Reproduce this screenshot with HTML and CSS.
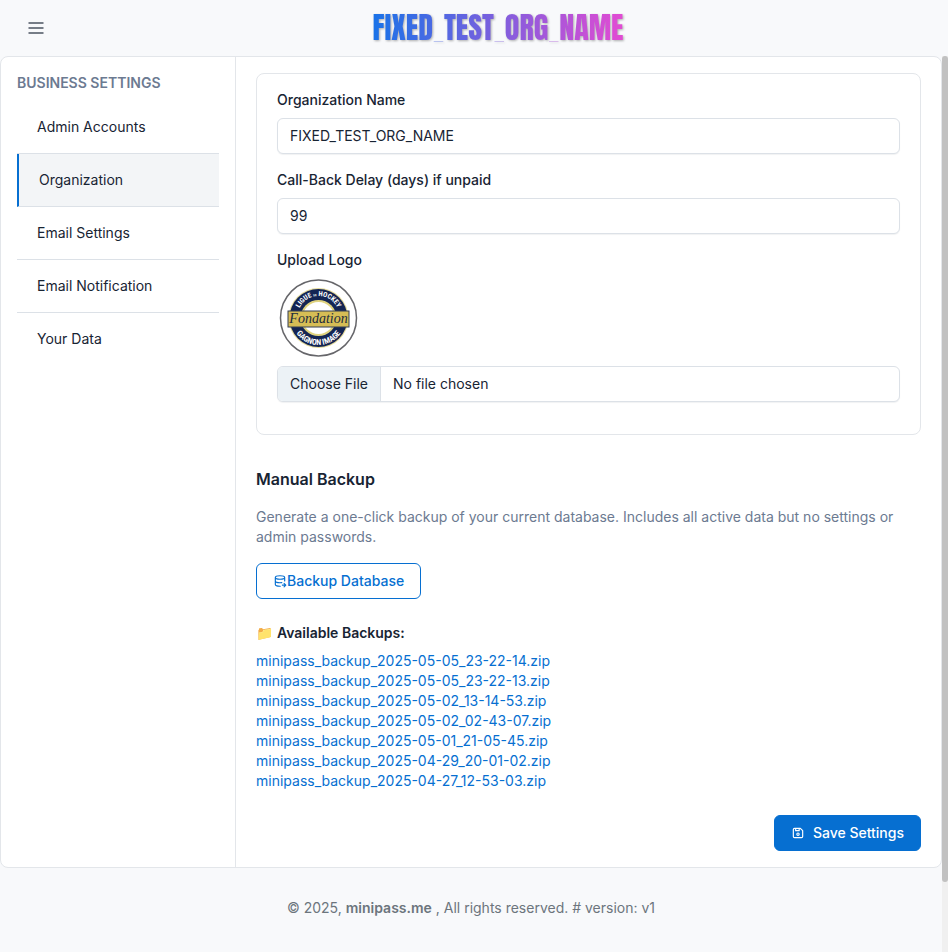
FILE: index.html
```html
<!DOCTYPE html>
<html lang="en">
<head>
<meta charset="utf-8">
<meta name="viewport" content="width=device-width, initial-scale=1">
<title>Organization settings</title>
<link rel="stylesheet" href="styles.css">
</head>
<body>
<header class="topbar">
  <button class="menu-button" type="button" aria-label="Menu">
    <svg viewBox="0 0 24 24" width="24" height="24" aria-hidden="true"><path d="M4.500 7h15M4.500 12h15M4.500 17h15"/></svg>
  </button>
  <div class="brand"><span class="brand-name">FIXED_TEST_ORG_NAME</span></div>
</header>
<div class="viewport">
  <div class="page">
    <main class="panel">
      <aside class="sidebar">
        <h2 class="sidebar-title">BUSINESS SETTINGS</h2>
        <nav class="tabs">
          <a class="tab" href="#admins">Admin Accounts</a>
          <a class="tab active" href="#organization">Organization</a>
          <a class="tab" href="#email">Email Settings</a>
          <a class="tab" href="#notification">Email Notification</a>
          <a class="tab" href="#data">Your Data</a>
        </nav>
      </aside>
      <form class="content">
        <section class="card">
          <div class="field">
            <label for="org">Organization Name</label>
            <input class="control" id="org" type="text" value="FIXED_TEST_ORG_NAME">
          </div>
          <div class="field">
            <label for="delay">Call-Back Delay (days) if unpaid</label>
            <input class="control" id="delay" type="text" inputmode="numeric" value="99">
          </div>
          <div class="field">
            <label for="logo">Upload Logo</label>
            <svg class="logo" viewBox="0 0 83 80" width="83" height="80" role="img" aria-label="Fondation logo">
              <defs>
                <path id="arc-top" d="M20.500 39a21 21 0 0 1 42 0"/>
                <path id="arc-bottom" d="M14.500 40a27 27 0 0 0 54 0"/>
              </defs>
              <circle cx="41.500" cy="40" r="38" fill="#fff" stroke="#66666a" stroke-width="1.500"/>
              <circle cx="41.500" cy="40" r="30" fill="#e6dc9c"/>
              <circle cx="41.500" cy="40" r="29" fill="#142553"/>
              <circle cx="41.500" cy="40" r="18" fill="#e0d37f"/>
              <circle cx="41.500" cy="40" r="16" fill="#fff"/>
              <text class="logo-ring"><textPath href="#arc-top" startOffset="50%">LIGUE <tspan class="logo-small">DE</tspan> HOCKEY</textPath></text>
              <text class="logo-ring logo-bottom"><textPath href="#arc-bottom" startOffset="50%">GAGNON IMAGE</textPath></text>
              <rect x="11" y="33" width="61" height="16" fill="#d6bd55" stroke="#343f55"/>
              <text class="logo-script" x="41.500" y="45">Fondation</text>
            </svg>
            <input class="control file" id="logo" type="file">
          </div>
        </section>
        <section class="backup">
          <h3>Manual Backup</h3>
          <p class="muted">Generate a one-click backup of your current database. Includes all active data but no settings or admin passwords.</p>
          <button class="button outline" type="button">
            <svg class="icon" viewBox="0 0 24 24" width="14" height="14" aria-hidden="true"><path d="M4 6c0 1.657 3.582 3 8 3s8-1.343 8-3-3.582-3-8-3-8 1.343-8 3M4 6v6c0 1.657 3.582 3 8 3 1.118 0 2.182-.086 3.148-.241M20 12V6M4 12v6c0 1.657 3.582 3 8 3 .157 0 .312-.002.466-.005M16 19h6M19 16l3 3-3 3"/></svg>Backup Database
          </button>
          <h4>📁 Available Backups:</h4>
          <ul class="files">
            <li><a href="#b1">minipass_backup_2025-05-05_23-22-14.zip</a></li>
            <li><a href="#b2">minipass_backup_2025-05-05_23-22-13.zip</a></li>
            <li><a href="#b3">minipass_backup_2025-05-02_13-14-53.zip</a></li>
            <li><a href="#b4">minipass_backup_2025-05-02_02-43-07.zip</a></li>
            <li><a href="#b5">minipass_backup_2025-05-01_21-05-45.zip</a></li>
            <li><a href="#b6">minipass_backup_2025-04-29_20-01-02.zip</a></li>
            <li><a href="#b7">minipass_backup_2025-04-27_12-53-03.zip</a></li>
          </ul>
        </section>
        <div class="actions">
          <button class="button primary" type="submit">
            <svg class="icon" viewBox="0 0 24 24" width="14" height="14" aria-hidden="true"><path d="M6 4h10l4 4v10a2 2 0 0 1-2 2H6a2 2 0 0 1-2-2V6a2 2 0 0 1 2-2M10 14a2 2 0 1 0 4 0 2 2 0 1 0-4 0M14 4v4H8V4"/></svg>Save Settings
          </button>
        </div>
      </form>
    </main>
    <footer class="footer">© 2025, <strong>minipass.me</strong> , All rights reserved. # version: v1</footer>
  </div>
  <div class="scroll-track" aria-hidden="true"><div class="scroll-thumb"></div></div>
</div>
</body>
</html>
```
FILE: styles.css
```css
* { box-sizing: border-box; }

body {
  margin: 0;
  min-height: 100vh;
  display: flex;
  flex-direction: column;
  background: #f8f9fb;
  color: #182433;
  font: 14px/20px Inter, "Noto Sans", "Noto Color Emoji", sans-serif;
}

a { color: #066fd1; text-decoration: none; }
h2, h3, h4, p, ul { margin: 0; padding: 0; }

.topbar { display: flex; align-items: center; height: 56px; padding-left: 24px; }
.menu-button { display: flex; padding: 0; border: 0; background: none; }
.menu-button svg { fill: none; stroke: #4b5462; stroke-width: 1.5; }
.brand { flex: 1; display: flex; justify-content: center; }
.brand-name {
  font: 400 30px/28px Anton, Impact, sans-serif;
  background: linear-gradient(90deg, #1a73e8, #e24bd3);
  background-clip: text;
  -webkit-background-clip: text;
  color: transparent;
  filter: drop-shadow(1px 1px 1px rgba(0, 0, 0, 0.3));
}

.viewport { flex: 1; display: flex; }
.page { flex: 1; min-width: 0; }
.panel {
  display: flex;
  background: #fff;
  border: 1px solid #e3e6ea;
  border-radius: 8px;
}

.sidebar { flex: 0 0 25%; padding: 16px; border-right: 1px solid #e3e6ea; }
.sidebar-title { margin-bottom: 8px; color: #6c7a91; font-size: 14px; font-weight: 600; line-height: 20px; }
.tab { display: block; padding: 16px 20px; border-bottom: 1px solid #dce1e7; color: #182433; }
.tab:last-child { border-bottom: 0; }
.tab.active { background: #f3f5f7; border-left: 2px solid #066fd1; }

.content { flex: 1; min-width: 0; padding: 16px 20px; }
.card { padding: 16px 20px; border: 1px solid #e3e6ea; border-radius: 8px; }
.field { margin-bottom: 16px; }
.field label { display: block; margin-bottom: 8px; font-weight: 500; }
.control {
  display: block;
  width: 100%;
  height: 36px;
  padding: 6px 12px 8px;
  border: 1px solid #dce1e7;
  border-radius: 6px;
  background: #fff;
  box-shadow: 0 1px 1px rgba(24, 36, 51, 0.06);
  color: inherit;
  font: inherit;
}
.file { padding: 7px 12px; overflow: hidden; }
.file::file-selector-button {
  margin: -7px 12px -7px -12px;
  padding: 7px 12px;
  border: 0;
  border-right: 1px solid #dce1e7;
  background: #ecf2f6;
  color: inherit;
  font: inherit;
}
.logo { display: block; margin-bottom: 8px; }
.logo-ring { fill: #fff; font: 700 7px "Roboto Condensed", Roboto, sans-serif; text-anchor: middle; }
.logo-bottom { font-size: 8px; }
.logo-small { font-size: 3px; }
.logo-script { fill: #222b3c; font: italic 400 14px "Liberation Serif", serif; text-anchor: middle; }

.backup { padding-top: 32px; }
.backup h3 { margin-bottom: 16px; font-size: 16px; font-weight: 600; line-height: 24px; }
.muted { margin-bottom: 16px; color: #6c7a91; }
.button {
  display: inline-flex;
  align-items: center;
  height: 36px;
  padding: 0 16px;
  border: 1px solid #066fd1;
  border-radius: 6px;
  font: 500 14px/20px Inter, sans-serif;
}
.outline { background: #fff; color: #066fd1; }
.primary { background: #066fd1; color: #fff; }
.primary .icon { margin-right: 8px; }
.icon { fill: none; stroke: currentColor; stroke-width: 2; stroke-linecap: round; stroke-linejoin: round; }
.backup h4 { margin: 24px 0 8px; font-size: 14px; font-weight: 600; line-height: 20px; }
.files { list-style: none; }
.actions { display: flex; justify-content: flex-end; margin-top: 24px; }

.footer { padding: 30px 16px; color: #6c757d; text-align: center; }
.footer strong { font-weight: 600; }

.scroll-track { flex: 0 0 6px; background: #f0f0f0; }
.scroll-thumb { height: 92.2%; border-radius: 3px; background: #c1c1c1; }
```
